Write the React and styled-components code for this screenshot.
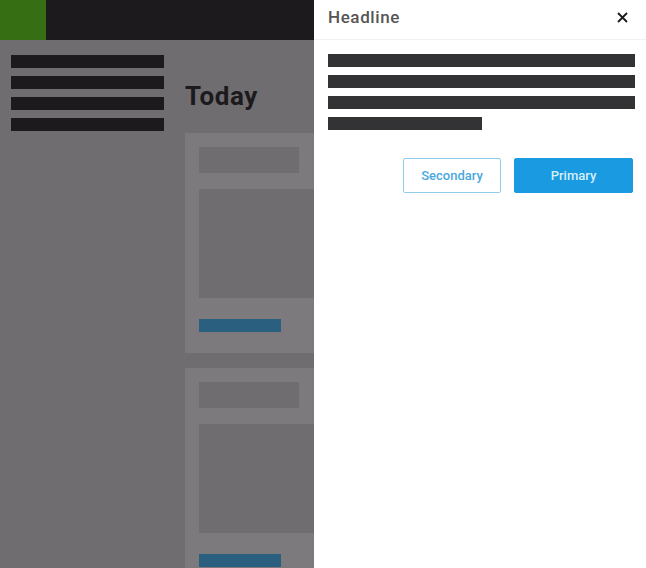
import React from "react";
import styled, { createGlobalStyle } from "styled-components";

const GlobalStyle = createGlobalStyle`
  html, body {
    margin: 0;
    padding: 0;
    background: #6f6d70;
    font-family: Roboto, "Liberation Sans", sans-serif;
    overflow: hidden;
  }
`;

const Page = styled.div`
  width: 646px;
  height: 568px;
  background: #6f6d70;
  overflow: hidden;
  position: relative;
`;

const TopBar = styled.header`
  height: 40px;
  background: #1c1a1d;
  display: flex;
`;

const Logo = styled.div`
  width: 46px;
  background: #356e13;
`;

const Body = styled.div`
  display: flex;
  gap: 21px;
  padding: 15px 0 0 11px;
`;

const Sidebar = styled.nav`
  width: 153px;
  display: flex;
  flex-direction: column;
  gap: 8px;
`;

const NavBar = styled.div`
  height: 13px;
  background: #1c1a1d;
`;

const Main = styled.main`
  display: flex;
  flex-direction: column;
`;

const Title = styled.h1`
  margin: 26px 0 0;
  height: 52px;
  font-size: 26px;
  line-height: 30px;
  font-weight: 700;
  letter-spacing: 0.6px;
  color: #1c1a1d;
  font-family: Roboto, "Liberation Sans", sans-serif;
`;

const Cards = styled.div`
  display: flex;
  flex-direction: column;
  gap: 15px;
`;

const Card = styled.article`
  width: 300px;
  background: #7c7a7d;
  padding: 14px 14px 21px;
  display: flex;
  flex-direction: column;
`;

const Block = styled.div`
  background: #6f6d70;
  width: ${(p) => p.$w || "100%"};
  height: ${(p) => p.$h}px;
  margin-bottom: ${(p) => p.$mb || 0}px;
`;

const LinkBar = styled.div`
  width: 82px;
  height: 13px;
  background: #2a5f80;
`;

const Drawer = styled.aside`
  position: absolute;
  top: 0;
  right: 0;
  bottom: 0;
  width: 332px;
  background: #fff;
  display: flex;
  flex-direction: column;
`;

const DrawerHead = styled.div`
  height: 40px;
  border-bottom: 1px solid #f1f1f1;
  display: flex;
  align-items: center;
  justify-content: space-between;
  padding: 0 18px 5px 14px;
  box-sizing: border-box;
`;

const Headline = styled.h2`
  margin: 0;
  font-size: 17px;
  font-weight: 500;
  color: #555;
  letter-spacing: 0.6px;
`;

const Close = styled.button`
  border: none;
  background: none;
  padding: 0;
  width: 12px;
  height: 12px;
  display: flex;
  align-items: center;
  justify-content: center;
  cursor: pointer;
`;

const DrawerBody = styled.div`
  padding: 14px 11px 0 14px;
  display: flex;
  flex-direction: column;
`;

const TextLines = styled.div`
  display: flex;
  flex-direction: column;
  gap: 8px;
`;

const TextLine = styled.div`
  height: 13px;
  width: ${(p) => p.$w || "100%"};
  background: #333234;
`;

const Actions = styled.div`
  display: flex;
  justify-content: flex-end;
  gap: 13px;
  margin-top: 28px;
  padding-right: 2px;
`;

const Button = styled.button`
  height: 35px;
  width: ${(p) => (p.$primary ? 119 : 98)}px;
  border-radius: 2px;
  font-family: Roboto, "Liberation Sans", sans-serif;
  font-size: 13px;
  font-weight: 500;
  cursor: pointer;
  border: 1px solid ${(p) => (p.$primary ? "#1a9ae0" : "#8fcdee")};
  background: ${(p) => (p.$primary ? "#1a9ae0" : "#fff")};
  color: ${(p) => (p.$primary ? "#d6eefb" : "#4aa8dc")};
`;

function FeedCard() {
  return (
    <Card>
      <Block $w="100px" $h={26} $mb={16} />
      <Block $h={109} $mb={21} />
      <LinkBar />
    </Card>
  );
}

export default function App() {
  return (
    <Page>
      <GlobalStyle />
      <TopBar>
        <Logo />
      </TopBar>
      <Body>
        <Sidebar>
          <NavBar />
          <NavBar />
          <NavBar />
          <NavBar />
        </Sidebar>
        <Main>
          <Title>Today</Title>
          <Cards>
            <FeedCard />
            <FeedCard />
          </Cards>
        </Main>
      </Body>
      <Drawer>
        <DrawerHead>
          <Headline>Headline</Headline>
          <Close aria-label="Close">
            <svg width="11" height="11" viewBox="0 0 11 11">
              <path d="M1 1L10 10M10 1L1 10" stroke="#1c1a1d" strokeWidth="1.8" />
            </svg>
          </Close>
        </DrawerHead>
        <DrawerBody>
          <TextLines>
            <TextLine />
            <TextLine />
            <TextLine />
            <TextLine $w="154px" />
          </TextLines>
          <Actions>
            <Button>Secondary</Button>
            <Button $primary>Primary</Button>
          </Actions>
        </DrawerBody>
      </Drawer>
    </Page>
  );
}
